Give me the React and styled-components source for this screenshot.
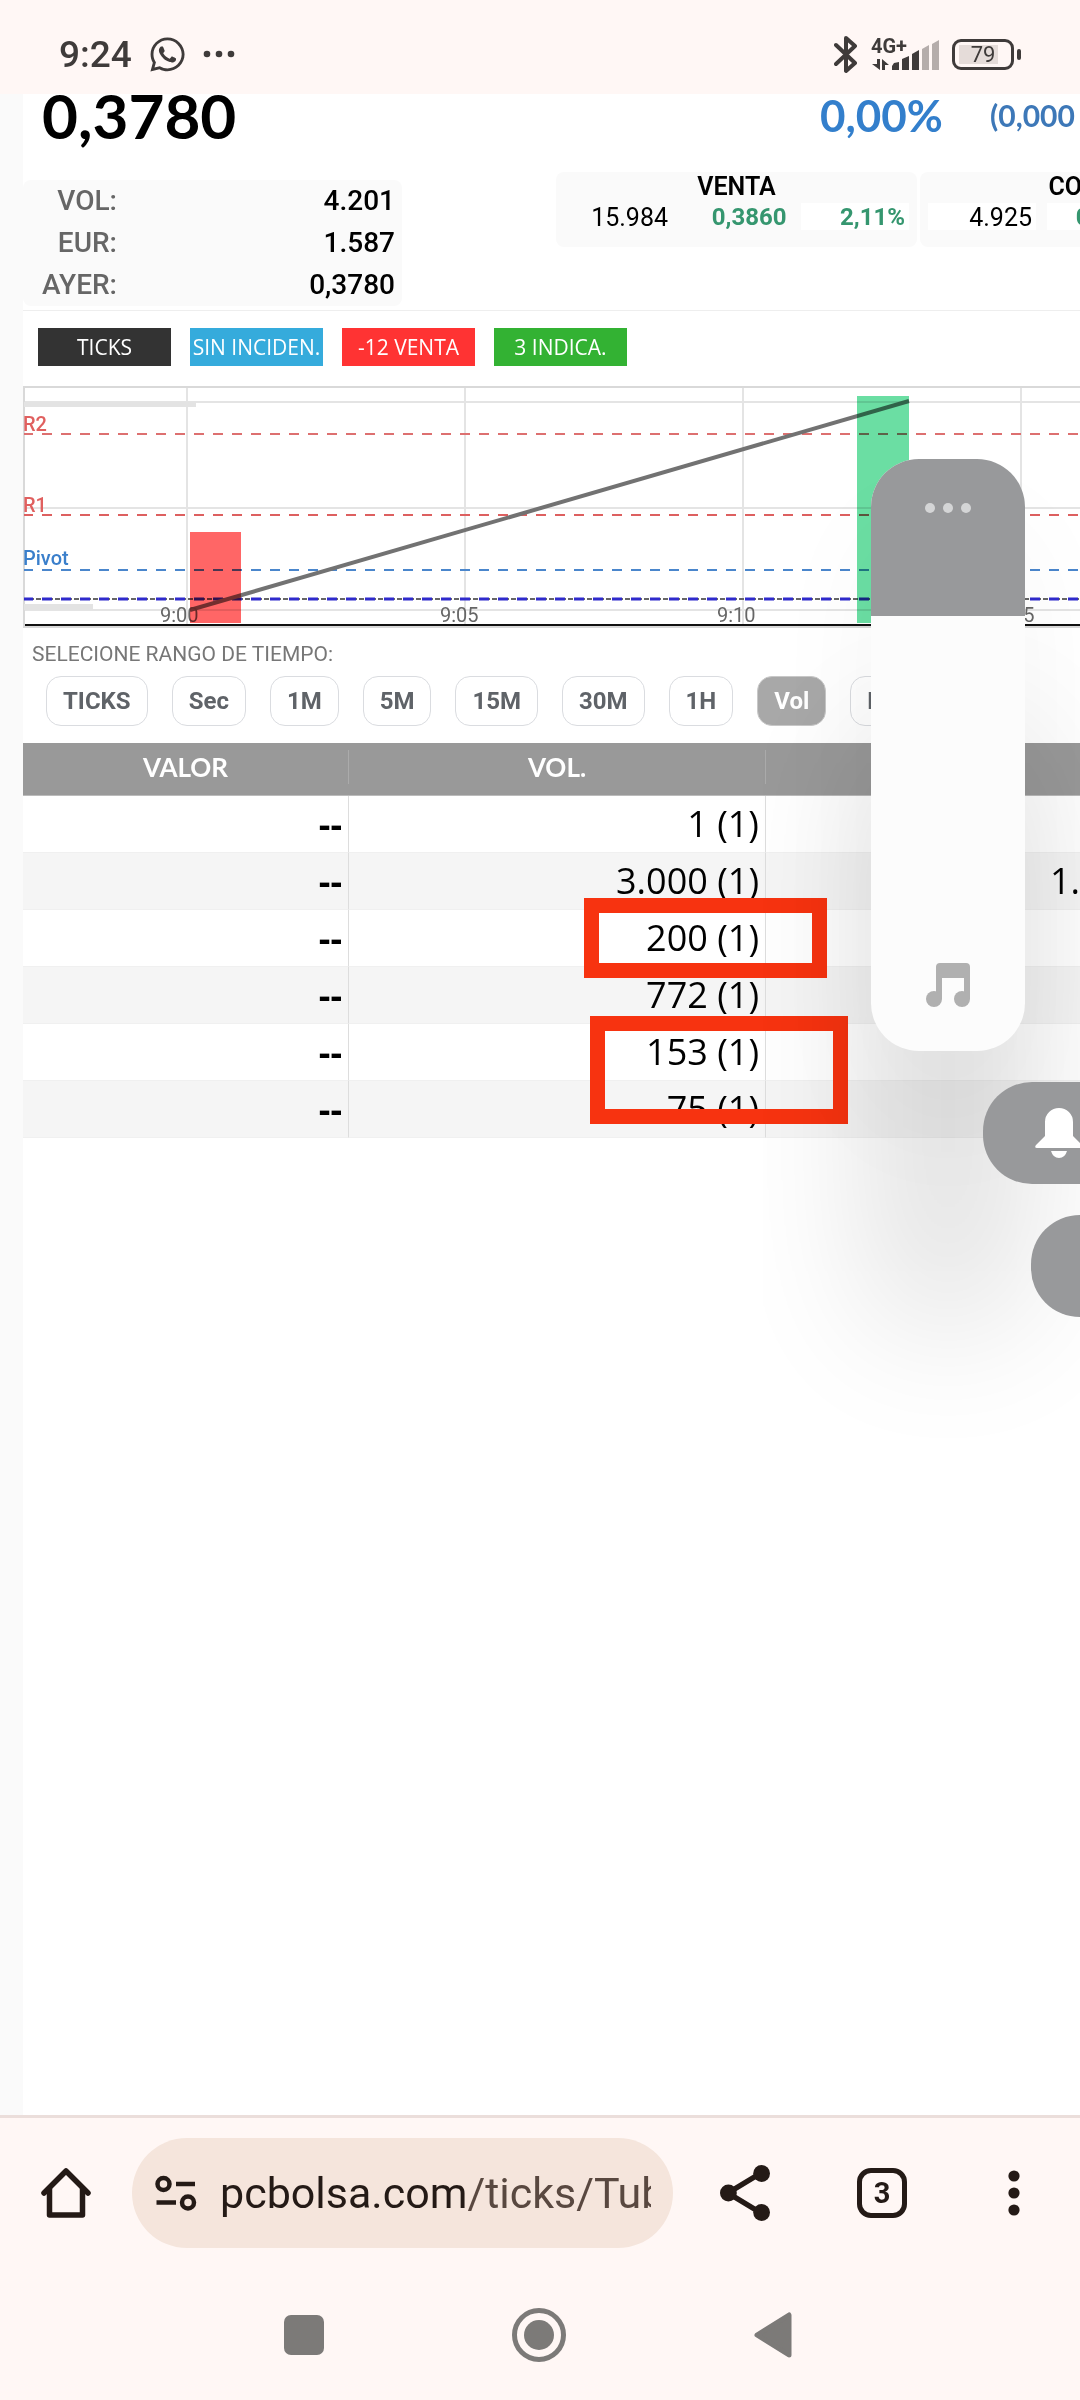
import React from "react";
import styled, { createGlobalStyle } from "styled-components";
import { FaWhatsapp } from "react-icons/fa";

const stats = [
  { label: "VOL:", value: "4.201" },
  { label: "EUR:", value: "1.587" },
  { label: "AYER:", value: "0,3780" },
];

const actions = [
  { label: "TICKS", color: "#333333" },
  { label: "SIN INCIDEN.", color: "#35abdc" },
  { label: "-12 VENTA", color: "#ff3333" },
  { label: "3 INDICA.", color: "#33b233" },
];

const ranges = ["TICKS", "Sec", "1M", "5M", "15M", "30M", "1H", "Vol", "D"];

const rows = [
  { valor: "--", vol: "1 (1)", total: "" },
  { valor: "--", vol: "3.000 (1)", total: "1." },
  { valor: "--", vol: "200 (1)", total: "" },
  { valor: "--", vol: "772 (1)", total: "" },
  { valor: "--", vol: "153 (1)", total: "" },
  { valor: "--", vol: "75 (1)", total: "" },
];

const StatusIcons = () => (
  <StatusGroup $gap={13}>
    <svg width="24" height="39" viewBox="0 0 24 39" fill="none" stroke="#3f3b3a" strokeWidth="4" strokeLinejoin="round" strokeLinecap="round">
      <path d="M2 10 L21 28 L12 36 V3 L21 11 L2 29" />
    </svg>
    <Network>
      <NetworkType>4G+</NetworkType>
      <svg width="68" height="32" viewBox="0 0 68 32" fill="#3f3b3a">
        <path d="M6 20 h3 v11 l-8 -6 h5z M11 31 v-11 l7 6 h-4 v5z" />
        <path d="M21 31 v-4 l2 -3 l5 -1 v8z" />
        <path d="M31 31 v-11 l7 -3 v14z" />
        <path d="M41 31 v-16 l7 -4 v20z" />
        <path d="M51 31 v-21 l7 -4 v25z" fill="#b5adab" />
        <path d="M61 31 v-26 l7 -4 v30z" fill="#b5adab" />
      </svg>
    </Network>
    <Battery>
      <BatteryBody>79</BatteryBody>
      <BatteryTip />
    </Battery>
  </StatusGroup>
);

const Chart = () => (
  <ChartSvg viewBox="0 0 1057 242" preserveAspectRatio="xMinYMin slice">
    <g stroke="#e4e4e4" strokeWidth="2">
      <path d="M164 0V240 M442 0V240 M720 0V240 M998 0V240" />
      <path d="M1 16H1057 M1 122H1057 M1 224H1057" />
    </g>
    <path d="M1 1H1057 M1 0V242" stroke="#d9d9d9" strokeWidth="2" />
    <rect x="1" y="16" width="172" height="5" fill="#e3e3e3" />
    <rect x="1" y="218" width="69" height="6" fill="#e3e3e3" />

    <g strokeWidth="2" strokeDasharray="10 9" strokeDashoffset="1">
      <path d="M1 48H1057" stroke="#dd7070" />
      <path d="M1 129H1057" stroke="#dd6060" />
      <path d="M1 184H1057" stroke="#4a86cc" />
    </g>
    <path d="M1 213H1057" stroke="#666" strokeWidth="2" strokeDasharray="10 2 5 2" />
    <path d="M1 213H1057" stroke="#2f2acc" strokeWidth="3" strokeDasharray="10 9" strokeDashoffset="1" />

    <ChartText x="0" y="45" fill="#e0605f" $strong>R2</ChartText>
    <ChartText x="0" y="126" fill="#e0605f" $strong>R1</ChartText>
    <ChartText x="0" y="179" fill="#3a7fcb" $strong>Pivot</ChartText>

    <path d="M167 224 L886 15" stroke="#727272" strokeWidth="4" />
    <ChartText x="137" y="236" fill="#666">9:00</ChartText>
    <ChartText x="417" y="236" fill="#666">9:05</ChartText>
    <ChartText x="694" y="236" fill="#666">9:10</ChartText>
    <ChartText x="973" y="236" fill="#666">9:15</ChartText>
    <VolumeBar x="167" y="146" width="51" height="91" fill="#ff6666" />
    <VolumeBar x="834" y="10" width="52" height="227" fill="#6bdea3" />

    <path d="M2 239H1057" stroke="#111" strokeWidth="2" />
    <path d="M2 241H1057" stroke="#d9d9d9" strokeWidth="2" />
  </ChartSvg>
);

const VolumePanel = () => (
  <Volume>
    <VolumeLevel>
      <Dot />
      <Dot />
      <Dot />
    </VolumeLevel>
    <svg width="44" height="44" viewBox="0 0 44 44" fill="#b0b0b0">
      <path d="M14 0 H40 Q44 0 44 4 V36 H38 V15 H16 V36 H10 V4 Q10 0 14 0Z" />
      <circle cx="8" cy="36" r="8" />
      <circle cx="36" cy="36" r="8" />
    </svg>
  </Volume>
);

const App = () => {
  return (
    <Screen>
      <GlobalStyle />

      <StatusBar>
        <StatusGroup $gap={16}>
          <Clock>9:24</Clock>
          <FaWhatsapp size={39} color="#3f3b3a" />
          <svg width="32" height="8" viewBox="0 0 32 8" fill="#3f3b3a">
            <circle cx="4" cy="4" r="3.3" />
            <circle cx="16" cy="4" r="3.3" />
            <circle cx="28" cy="4" r="3.3" />
          </svg>
        </StatusGroup>
        <StatusIcons />
      </StatusBar>

      <Content>
        <PriceRow>
          <Price>0,3780</Price>
          <Percent>0,00%</Percent>
          <Delta>(0,000</Delta>
        </PriceRow>

        <Summary>
          <Stats>
            {stats.map((stat) => (
              <Stat key={stat.label}>
                <dt>{stat.label}</dt>
                <dd>{stat.value}</dd>
              </Stat>
            ))}
          </Stats>
          <Depth>
            <Side>
              <h2>VENTA</h2>
              <Level>
                <Cell>15.984</Cell>
                <Cell $green>0,3860</Cell>
                <Cell $green $white>2,11%</Cell>
              </Level>
            </Side>
            <Side>
              <h2>COMPRA</h2>
              <Level>
                <Cell $white>4.925</Cell>
                <Cell $green $white>0,3780</Cell>
                <Cell $white />
              </Level>
            </Side>
          </Depth>
        </Summary>

        <Actions>
          {actions.map((action) => (
            <Action key={action.label} $color={action.color}>{action.label}</Action>
          ))}
        </Actions>

        <Chart />

        <RangeLabel>SELECIONE RANGO DE TIEMPO:</RangeLabel>
        <Ranges>
          {ranges.map((range) => (
            <Range key={range} $active={range === "Vol"}>{range}</Range>
          ))}
        </Ranges>

        <Table>
          <colgroup>
            <col width="326" />
            <col width="417" />
            <col />
          </colgroup>
          <thead>
            <tr>
              <Th><span>VALOR</span></Th>
              <Th><span>VOL.</span></Th>
              <Th />
            </tr>
          </thead>
          <tbody>
            {rows.map((row, i) => (
              <Row key={i}>
                <Td $bold>{row.valor}</Td>
                <Td>{row.vol}</Td>
                <Td $last>{row.total}</Td>
              </Row>
            ))}
          </tbody>
        </Table>
      </Content>

      <BottomBar>
        <Toolbar>
          <IconButton aria-label="Inicio">
            <svg width="50" height="52" viewBox="0 0 50 52" fill="none" stroke="#241a16" strokeWidth="5.5" strokeLinejoin="round" strokeLinecap="round">
              <path d="M3 26 L25 4 L47 26" />
              <path d="M8.5 22 V48 H41.5 V22" />
            </svg>
          </IconButton>
          <Address>
            <svg width="42" height="36" viewBox="0 0 42 36" fill="none" stroke="#241a16" strokeWidth="4.5">
              <circle cx="8.500" cy="9" r="6" />
              <circle cx="33" cy="27.500" r="6" />
              <path d="M21 9H40 M1.500 27.500H21" />
            </svg>
            <Url>
              pcbolsa.com<span>/ticks/Tub</span>
            </Url>
          </Address>
          <IconButton aria-label="Compartir">
            <svg width="50" height="56" viewBox="0 0 50 56" fill="#241a16">
              <path d="M41 8 L8 28 L41 48" fill="none" stroke="#241a16" strokeWidth="5.5" />
              <circle cx="8.400" cy="28" r="8.4" />
              <circle cx="41.600" cy="8.500" r="8.4" />
              <circle cx="41.600" cy="47.500" r="8.4" />
            </svg>
          </IconButton>
          <IconButton aria-label="Pestañas">
            <TabCount>3</TabCount>
          </IconButton>
          <IconButton aria-label="Menú">
            <svg width="12" height="46" viewBox="0 0 12 46" fill="#241a16">
              <circle cx="6" cy="6" r="5.6" />
              <circle cx="6" cy="23" r="5.6" />
              <circle cx="6" cy="40" r="5.6" />
            </svg>
          </IconButton>
        </Toolbar>

        <SystemNav>
          <IconButton aria-label="Recientes">
            <svg width="40" height="40" viewBox="0 0 40 40">
              <rect width="40" height="40" rx="7" fill="#7c7a78" />
            </svg>
          </IconButton>
          <IconButton aria-label="Pantalla de inicio">
            <svg width="54" height="54" viewBox="0 0 54 54">
              <circle cx="27" cy="27" r="24.5" fill="none" stroke="#7c7a78" strokeWidth="5" />
              <circle cx="27" cy="27" r="15" fill="#7c7a78" />
            </svg>
          </IconButton>
          <IconButton aria-label="Atrás">
            <svg width="38" height="46" viewBox="0 0 38 46">
              <path d="M3 23 L35 3 V43Z" fill="#7c7a78" stroke="#7c7a78" strokeWidth="5" strokeLinejoin="round" />
            </svg>
          </IconButton>
        </SystemNav>
      </BottomBar>

      {/* hand drawn marks over the table */}
      <Mark $top={898} $left={584} $width={243} $height={80} />
      <Mark $top={1016} $left={590} $width={258} $height={108} />

      <VolumePanel />
      <SidePill $top={1082} $width={97} aria-label="Sonido">
        <svg width="48" height="50" viewBox="0 0 48 50" fill="#fff">
          <path d="M10 14 A14 14 0 0 1 38 14 V28 L47 37 Q49 40 46 40 H2 Q-1 40 1 37 L10 28Z" />
          <path d="M16 43 H32 Q30 50 24 50 Q18 50 16 43Z" />
        </svg>
      </SidePill>
      <SidePill $top={1215} $width={49} aria-label="No molestar" />
    </Screen>
  );
};

const GlobalStyle = createGlobalStyle`
  * {
    box-sizing: border-box;
  }

  body {
    margin: 0;
    background-color: #ffffff;
    font-family: Roboto, sans-serif;
  }

  button {
    padding: 0;
    border: 0;
    background: none;
    font-family: inherit;
  }
`;

const Screen = styled.div`
  position: relative;
  display: flex;
  flex-direction: column;
  min-height: 100vh;
  overflow: hidden;
`;

const StatusBar = styled.header`
  display: flex;
  align-items: center;
  justify-content: space-between;
  height: 94px;
  padding: 14px 59px 0;
  background-color: #fff7f5;
`;

const StatusGroup = styled.div`
  display: flex;
  align-items: center;
  gap: ${(props) => props.$gap}px;
  color: #3f3b3a;
`;

const Clock = styled.div`
  font-size: 37px;
  font-weight: 500;
`;

const Network = styled.div`
  position: relative;
  display: flex;
  align-items: flex-end;
  height: 34px;
`;

const NetworkType = styled.div`
  position: absolute;
  top: -1px;
  left: 0;
  font-size: 20px;
  font-weight: 700;
  line-height: 20px;
`;

const Battery = styled.div`
  display: flex;
  align-items: center;
  gap: 3px;
`;

const BatteryBody = styled.div`
  display: flex;
  align-items: center;
  justify-content: center;
  width: 62px;
  height: 31px;
  border: 3px solid #3f3b3a;
  border-radius: 9px;
  background: linear-gradient(#e5dcd9, #e5dcd9) 4px center / 39px 19px no-repeat;
  font-size: 22px;
`;

const BatteryTip = styled.div`
  width: 4px;
  height: 11px;
  border-radius: 2px;
  background-color: #3f3b3a;
`;

const Content = styled.main`
  flex: 1;
  overflow: hidden;
  border-left: 23px solid #fafafa;
`;

const PriceRow = styled.div`
  display: grid;
  grid-template-columns: 1fr 170px 90px;
  align-items: center;
  height: 40px;
  padding-left: 19px;
  font-family: Lato, sans-serif;
  line-height: 42px;
  white-space: nowrap;
`;

const Price = styled.div`
  font-size: 62px;
  font-weight: 700;
`;

const Percent = styled.div`
  color: #337fcc;
  font-size: 44px;
  font-weight: 700;
`;

const Delta = styled.div`
  color: #3d78b8;
  font-size: 30px;
  font-weight: 700;
`;

const Summary = styled.section`
  display: grid;
  grid-template-columns: 379px 1fr 524px;
  margin-top: 38px;
  padding-bottom: 4px;
  border-bottom: 1px solid #eeeeee;
`;

const Stats = styled.dl`
  margin: 8px 0 0;
  border-radius: 8px;
  background-color: #fafafa;
  font-size: 28px;
  font-weight: 500;
  line-height: 42px;
`;

const Stat = styled.div`
  display: flex;
  justify-content: space-between;
  padding-right: 7px;

  dt {
    width: 94px;
    color: #666666;
    text-align: right;
  }

  dd {
    margin: 0;
  }
`;

const Depth = styled.div`
  display: flex;
  align-items: flex-start;
  gap: 3px;
  grid-column: 3;
`;

const Side = styled.div`
  flex: 0 0 361px;
  padding: 0 8px 17px;
  border-radius: 8px;
  background-color: #fafafa;

  h2 {
    margin: 0 0 1px;
    font-size: 25px;
    font-weight: 600;
    line-height: 30px;
    text-align: center;
  }
`;

const Level = styled.div`
  display: flex;
  justify-content: space-between;
`;

const Cell = styled.div`
  width: 108px;
  height: 27px;
  padding-right: 4px;
  background-color: ${(props) => (props.$white ? "#ffffff" : "transparent")};
  color: ${(props) => (props.$green ? "#35966f" : "#000000")};
  font-size: ${(props) => (props.$green ? 24 : 25)}px;
  font-weight: ${(props) => (props.$green ? 700 : 400)};
  line-height: 29px;
  text-align: right;
`;

const Actions = styled.div`
  display: flex;
  gap: 19px;
  padding: 17px 15px 20px;
`;

const Action = styled.button`
  width: 133px;
  height: 38px;
  background-color: ${(props) => props.$color};
  color: #ffffff;
  && {
    font-family: "Open Sans", sans-serif;
  }
  font-size: 21px;
  white-space: nowrap;
`;

const ChartSvg = styled.svg`
  display: block;
  width: 100%;
  height: 242px;
`;

const ChartText = styled.text`
  font-family: Roboto, sans-serif;
  font-size: 20px;
  font-weight: ${(props) => (props.$strong ? 500 : 400)};
`;

const VolumeBar = styled.rect`
  mix-blend-mode: multiply;
`;

const RangeLabel = styled.div`
  margin: 11px 0 7px 9px;
  color: #777777;
  font-size: 21px;
  line-height: 30px;
`;

const Ranges = styled.div`
  display: flex;
  gap: 24px;
  padding-left: 23px;
`;

const Range = styled.button`
  flex-shrink: 0;
  height: 50px;
  && {
    padding: 0 16px;
    border: 1px solid ${(props) => (props.$active ? "#c8c8c8" : "#dadce0")};
    background-color: ${(props) => (props.$active ? "#a8a8a8" : "#ffffff")};
  }
  border-radius: 15px;
  color: ${(props) => (props.$active ? "#ffffff" : "#5f6368")};
  font-size: 24px;
  font-weight: 700;
`;

const Table = styled.table`
  width: 100%;
  margin-top: 17px;
  border-spacing: 0;
  table-layout: fixed;
`;

const Th = styled.th`
  height: 53px;
  padding: 0 0 5px;
  border-bottom: 1px solid #bbbbbb;
  background-color: #999999;
  color: #ffffff;
  font-family: Lato, sans-serif;
  font-size: 26px;
  font-weight: 700;

  span {
    display: block;
    border-right: 1px solid #ababab;
    line-height: 34px;
  }
`;

const Row = styled.tr`
  background-color: #ffffff;

  &:nth-child(even) {
    background-color: #f5f5f5;
  }
`;

const Td = styled.td`
  height: 57px;
  padding: 0 ${(props) => (props.$last ? 0 : 6)}px 0 0;
  border-right: ${(props) => (props.$last ? 0 : 1)}px solid #dddddd;
  border-bottom: 1px solid #f0f0f0;
  font-family: "Open Sans", sans-serif;
  font-size: 36px;
  font-weight: ${(props) => (props.$bold ? 700 : 400)};
  line-height: 56px;
  text-align: right;
  white-space: nowrap;
`;

const BottomBar = styled.footer`
  border-top: 3px solid #ebdedb;
  background-color: #fff7f5;
`;

const Toolbar = styled.div`
  display: flex;
  align-items: center;
  padding: 20px 60px 0 41px;
`;

const IconButton = styled.button`
  display: flex;
  flex-shrink: 0;
`;

const Address = styled.button`
  display: flex;
  flex: 1;
  align-items: center;
  gap: 23px;
  min-width: 0;
  height: 110px;
  margin: 0 47px 0 41px;
  && {
    padding: 0 22px 0 23px;
    background-color: #f5e5dc;
  }
  border-radius: 55px;

  svg {
    flex-shrink: 0;
  }

  ~ button + button {
    margin-left: 87px;
  }

  ~ button + button:last-child {
    margin-left: 101px;
  }
`;

const Url = styled.div`
  flex: 1;
  overflow: hidden;
  color: #241a16;
  font-size: 43px;
  line-height: 60px;
  text-align: left;
  white-space: nowrap;

  span {
    color: #594840;
  }
`;

const TabCount = styled.span`
  width: 50px;
  height: 50px;
  border: 5px solid #241a16;
  border-radius: 14px;
  color: #241a16;
  font-size: 29px;
  font-weight: 700;
  line-height: 40px;
  text-align: center;
`;

const SystemNav = styled.nav`
  display: flex;
  align-items: center;
  justify-content: space-between;
  padding: 60px 288px 38px 284px;
`;

const Mark = styled.div`
  position: absolute;
  top: ${(props) => props.$top}px;
  left: ${(props) => props.$left}px;
  width: ${(props) => props.$width}px;
  height: ${(props) => props.$height}px;
  border: 15px solid #f73310;
`;

const Volume = styled.div`
  position: absolute;
  top: 459px;
  right: 55px;
  display: flex;
  flex-direction: column;
  align-items: center;
  justify-content: space-between;
  width: 154px;
  height: 592px;
  padding-bottom: 44px;
  overflow: hidden;
  border-radius: 48px;
  background-color: #fcfcfc;
  box-shadow: 0 275px 140px rgba(0, 0, 0, 0.12), 0 70px 120px rgba(0, 0, 0, 0.04);
`;

const VolumeLevel = styled.div`
  display: flex;
  justify-content: center;
  gap: 8px;
  width: 100%;
  height: 157px;
  padding-top: 44px;
  background-color: #98999b;
`;

const Dot = styled.span`
  width: 10px;
  height: 10px;
  border-radius: 50%;
  background-color: #d4d5d6;
`;

const SidePill = styled.button`
  position: absolute;
  top: ${(props) => props.$top}px;
  right: 0;
  width: ${(props) => props.$width}px;
  height: 102px;
  overflow: hidden;
  && {
    background-color: #98999b;
  }
  border-radius: 49px 0 0 49px;

  svg {
    display: block;
    margin-left: 52px;
  }
`;

export default App;
